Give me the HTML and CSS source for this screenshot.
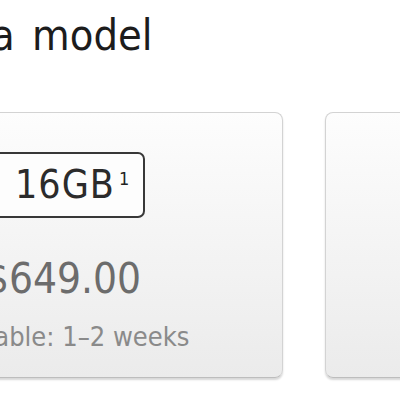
FILE: index.html
```html
<!DOCTYPE html>
<html lang="en">
<head>
  <meta charset="UTF-8">
  <title>Choose a model</title>
  <link rel="stylesheet" href="styles.css">
</head>
<body>

<!-- model picker -->
<h2 class="picker-title">Choose a model</h2>

<div class="models">
  <div class="model-card">
    <div class="capacity">16GB<sup>1</sup></div>
    <div class="price">$649.00</div>
    <div class="ships">Available: 1–2 weeks</div>
  </div>
  <div class="model-card"></div>
</div>

</body>
</html>
```

FILE: styles.css
```css
* {
  box-sizing: border-box;
  margin: 0;
  padding: 0;
}
body {
  font-family: "DejaVu Sans Condensed", "DejaVu Sans", sans-serif;
  background: #fff;
  overflow: hidden;
  width: 400px;
  height: 400px;
}

.picker-title {
  font-size: 43px;
  line-height: 50px;
  font-weight: normal;
  color: #1c1c1c;
  word-spacing: 5px;
  margin: 10px 0 0 -169px;
  white-space: nowrap;
}

/* cards */
.models {
  display: flex;
  gap: 42px;
  margin: 52px 0 0 -157px;
  width: max-content;
}
.model-card {
  width: 440px;
  height: 266px;
  flex-shrink: 0;
  text-align: center;
  padding-top: 39px;
  border: 1px solid #d3d3d3;
  border-bottom-color: #bdbdbd;
  border-radius: 8px;
  background: linear-gradient(to bottom, #fdfdfd, #ebebeb);
  box-shadow: 0 2px 2px rgba(0, 0, 0, .16);
}

.capacity {
  display: inline-block;
  width: 164px;
  height: 66px;
  border: 2px solid #383838;
  border-radius: 7px;
  background: #fdfdfd;
  font-size: 39px;
  letter-spacing: 1px;
  line-height: 62px;
  color: #2b2b2b;
  text-align: left;
  padding-left: 32px;
}
.capacity sup {
  font-size: 18px;
  vertical-align: top;
  line-height: 1;
  position: relative;
  top: 16px;
  margin-left: 4px;
  letter-spacing: 0;
  color: #222;
}

.price {
  font-size: 42px;
  line-height: 50px;
  color: #6c6c6c;
  margin-top: 36px;
}
.ships {
  font-size: 27px;
  line-height: 30px;
  color: #8a8a8a;
  margin-top: 18px;
  white-space: nowrap;
}
```
